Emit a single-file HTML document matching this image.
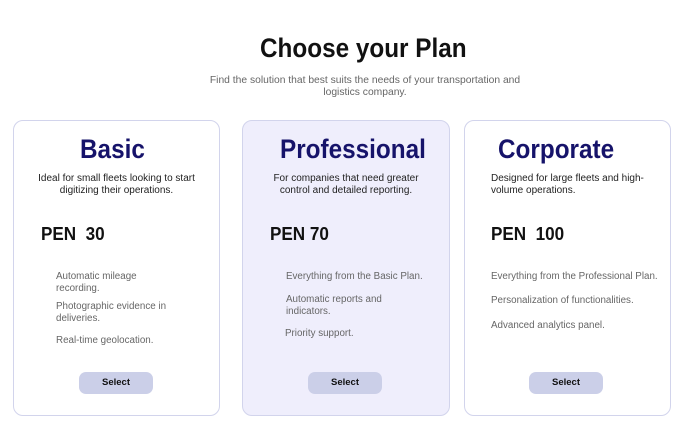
<!DOCTYPE html>
<html><head><style>
body{margin:0;width:675px;height:430px;background:#fff;position:relative;font-family:"Liberation Sans",sans-serif;overflow:hidden}
.a{position:absolute;white-space:nowrap}
.card{position:absolute;top:120px;height:296px;border:1px solid #d2d4ec;border-radius:10px;box-sizing:border-box;background:#fff}
.h{position:absolute;font-weight:bold;color:#16136a;font-size:27px;white-space:nowrap;transform-origin:0 0;transform:scaleX(0.9)}
.d{position:absolute;font-size:10px;color:#222;line-height:12px}
.p{position:absolute;font-weight:bold;font-size:18px;color:#111;white-space:pre;transform-origin:0 0;transform:scaleX(0.95)}
.f{position:absolute;font-size:9.8px;color:#666;line-height:12px;white-space:nowrap}
.btn{position:absolute;width:74px;height:22px;border-radius:7px;background:#cbcfe8;font-size:9.5px;font-weight:bold;text-align:center;line-height:22px;color:#111}
</style></head><body>
<div class="a" style="left:260px;top:33px;font-size:27px;font-weight:bold;color:#111;transform-origin:0 0;transform:scaleX(0.9)">Choose your Plan</div>
<div class="a" style="left:0;width:730px;top:75px;text-align:center;font-size:10.3px;color:#666;line-height:12px">Find the solution that best suits the needs of your transportation and<br>logistics company.</div>

<div class="card" style="left:13px;width:207px"></div>
<div class="card" style="left:242px;width:208px;background:#efeefc"></div>
<div class="card" style="left:464px;width:207px"></div>

<div class="h" style="left:80px;top:134px">Basic</div>
<div class="d" style="left:13px;width:207px;top:173px;text-align:center">Ideal for small fleets looking to start<br>digitizing their operations.</div>
<div class="p" style="left:41px;top:224px">PEN  30</div>
<div class="f" style="left:56px;top:271px">Automatic mileage<br>recording.</div>
<div class="f" style="left:56px;top:301px">Photographic evidence in<br>deliveries.</div>
<div class="f" style="left:56px;top:335px">Real-time geolocation.</div>
<div class="btn" style="left:79px;top:372px">Select</div>

<div class="h" style="left:280px;top:134px">Professional</div>
<div class="d" style="left:242px;width:208px;top:173px;text-align:center">For companies that need greater<br>control and detailed reporting.</div>
<div class="p" style="left:270px;top:224px">PEN 70</div>
<div class="f" style="left:286px;top:271px">Everything from the Basic Plan.</div>
<div class="f" style="left:286px;top:294px">Automatic reports and<br>indicators.</div>
<div class="f" style="left:285px;top:328px">Priority support.</div>
<div class="btn" style="left:308px;top:372px">Select</div>

<div class="h" style="left:498px;top:134px">Corporate</div>
<div class="d" style="left:491px;top:173px">Designed for large fleets and high-<br>volume operations.</div>
<div class="p" style="left:491px;top:224px">PEN  100</div>
<div class="f" style="left:491px;top:271px">Everything from the Professional Plan.</div>
<div class="f" style="left:491px;top:295px">Personalization of functionalities.</div>
<div class="f" style="left:491px;top:320px">Advanced analytics panel.</div>
<div class="btn" style="left:529px;top:372px">Select</div>
</body></html>
